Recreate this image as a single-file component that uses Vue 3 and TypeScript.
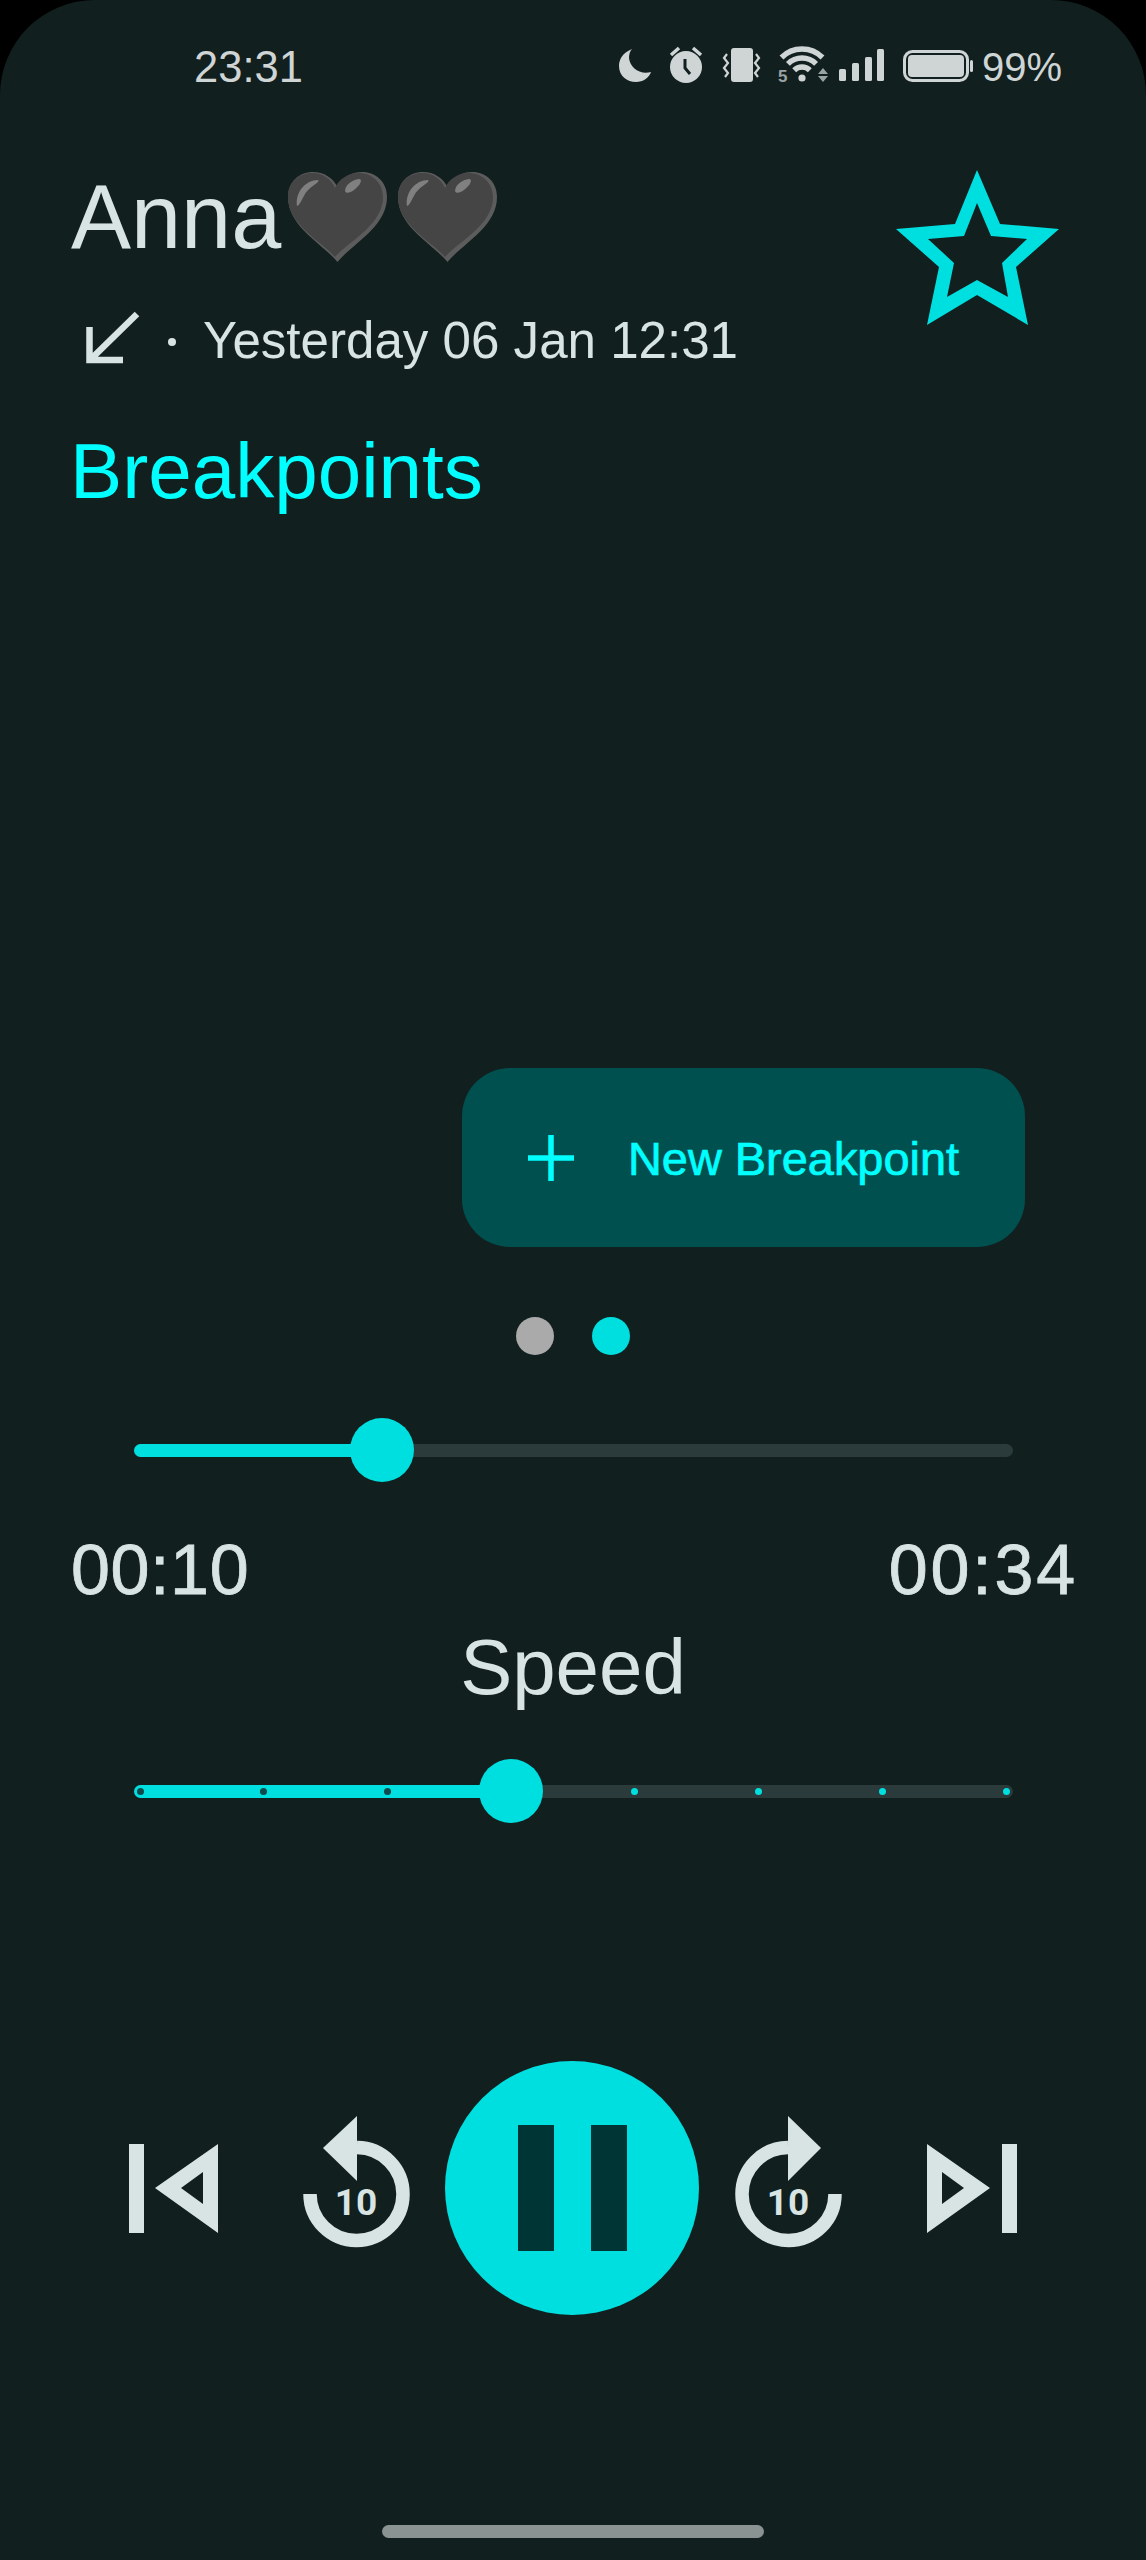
<template>
  <div class="phone">
    <!-- Status bar -->
    <div class="status">
      <span class="clock">23:31</span>
      <div class="status-icons">
        <svg width="45" height="40" viewBox="615 45 45 40">
          <path d="M632 49C622 53 619 60 619 66C619 76 627 82 636 82C643 82 649 78 651 72C640 75 630 68 629 58C629 54 630 51 632 49Z" />
        </svg>
        <svg width="53" height="40" viewBox="660 45 53 40">
          <circle cx="686" cy="67" r="16" />
          <path d="M671 55L679 48M693 48L701 55" class="line" stroke-width="3.5" />
          <path d="M685 59V68L690 74" fill="none" stroke="#121f1f" stroke-width="3" />
        </svg>
        <svg width="57" height="40" viewBox="713 45 57 40">
          <rect x="731" y="48" width="22" height="34" rx="3" />
          <path d="M727 54L724 58L728 63L724 68L728 73L725 77M756 54L759 58L755 63L759 68L755 73L758 77" class="line" stroke-width="2.2" />
        </svg>
        <svg width="62" height="40" viewBox="770 45 62 40">
          <circle cx="802" cy="78" r="3.6" />
          <path d="M781.5 57.500A29 29 0 0 1 822.500 57.500M787.900 63.900A20 20 0 0 1 816.100 63.900M794.200 70.200A11 11 0 0 1 809.800 70.200" class="line" stroke-width="5.500" />
          <text x="778" y="82" class="five">5</text>
          <path d="M823 68L828 74H818ZM823 82L828 76H818Z" class="dim" />
        </svg>
        <svg width="61" height="40" viewBox="832 45 61 40">
          <rect x="839" y="69" width="7" height="12" rx="1.500" />
          <rect x="852" y="63" width="7" height="18" rx="1.500" />
          <rect x="865" y="57" width="7" height="24" rx="1.500" />
          <rect x="877" y="49" width="7" height="32" rx="1.500" />
        </svg>
        <svg width="84" height="40" viewBox="893 45 84 40">
          <rect x="904.500" y="51.500" width="63" height="29" rx="8" class="line" stroke-width="3" />
          <rect x="908" y="55" width="56" height="22" rx="4" />
          <rect x="970" y="60" width="3" height="12" rx="1.500" />
        </svg>
        <span class="battery-text">99%</span>
      </div>
    </div>

    <!-- Contact header -->
    <div class="head">
      <div class="head-left">
        <div class="title-row">
          <span class="name">Anna</span>
          <svg v-for="n in 2" :key="n" class="heart" width="99" height="90" viewBox="0 0 99 90">
            <path d="M49.500 90C35 72 0 55 0 25C0 10 11 0 25 0C36 0 45 6 49.500 15C54 6 63 0 74 0C88 0 99 10 99 25C99 55 64 72 49.500 90Z" fill="#5c5c5c" />
            <path d="M47 85C33 69 0 53 0 25C0 10 11 1 24 1C35 1 43 7 47 16C51 7 60 1 71 1C84 1 95 11 95 25C95 53 61 69 47 85Z" fill="#454545" />
            <path d="M9 34C7 20 18 8 30 8C33 10 22 14 17 22C14 27 12 33 9 34Z" fill="#808080" />
            <path d="M57 19C57 13 65 7 72 7C75 9 70 15 66 18C62 21 58 22 57 19Z" fill="#808080" />
          </svg>
        </div>
        <div class="meta">
          <svg width="132" height="60" viewBox="71 311 132 60">
            <path d="M137 314L90 360M89.500 327V360H123" fill="none" stroke="#d8e4e4" stroke-width="6.500" />
            <circle cx="172" cy="342" r="4" fill="#d8e4e4" />
          </svg>
          <span>Yesterday 06 Jan 12:31</span>
        </div>
      </div>
      <svg class="star" width="175" height="165" viewBox="890 165 175 165">
        <path fill-rule="evenodd" d="M977 170L1000 224L1059 229L1016 267L1028 325L977 295L927 325L939 267L896 229L955 224ZM977 203L964 236L928 239L954 263L947 297L977 280L1008 297L1002 263L1027 239L991 236Z" />
      </svg>
    </div>

    <h2 class="section-title">Breakpoints</h2>

    <div class="new-row">
      <button class="new-btn">
        <svg width="46" height="46" viewBox="0 0 46 46">
          <path d="M23 0V46M0 23H46" stroke="#00ffff" stroke-width="5.500" />
        </svg>
        <span>New Breakpoint</span>
      </button>
    </div>

    <div class="pager">
      <span class="pager-dot"></span>
      <span class="pager-dot active"></span>
    </div>

    <!-- Seek slider -->
    <div class="slider seek">
      <div class="track">
        <div class="fill" :style="{ width: seekPct + '%' }"></div>
      </div>
      <div class="thumb" :style="{ left: seekPct + '%' }"></div>
    </div>

    <div class="times">
      <span class="elapsed">00:10</span>
      <span class="total">00:34</span>
    </div>

    <div class="speed-label">Speed</div>

    <!-- Speed slider -->
    <div class="slider speed">
      <div class="track">
        <div class="fill" :style="{ width: speedPct + '%' }"></div>
        <span
          v-for="t in ticks"
          :key="t.pos"
          class="tick"
          :class="{ on: t.on }"
          :style="{ left: t.pos + '%' }"
        ></span>
      </div>
      <div class="thumb" :style="{ left: speedPct + '%' }"></div>
    </div>

    <!-- Player controls -->
    <div class="controls">
      <svg width="180" height="254" viewBox="120 2061 180 254">
        <path fill-rule="evenodd" d="M129 2144H144V2233H129ZM155 2188L218 2144V2233ZM181 2188L203 2204V2172Z" />
      </svg>
      <svg width="145" height="254" viewBox="300 2061 145 254">
        <path d="M310 2194A46.500 46.500 0 1 0 357 2147.500" fill="none" stroke="#d8e4e4" stroke-width="13.500" />
        <path d="M357 2116L323 2148L357 2181Z" />
        <text x="356" y="2215" class="ten" text-anchor="middle">10</text>
      </svg>
      <button class="pause">
        <span class="pause-bar"></span>
        <span class="pause-bar"></span>
      </button>
      <svg width="145" height="254" viewBox="699 2061 145 254">
        <path d="M835 2194A46.500 46.500 0 1 1 788 2147.500" fill="none" stroke="#d8e4e4" stroke-width="13.500" />
        <path d="M788 2116L821 2148L788 2181Z" />
        <text x="788" y="2215" class="ten" text-anchor="middle">10</text>
      </svg>
      <svg width="180" height="254" viewBox="844 2061 180 254">
        <path fill-rule="evenodd" d="M1002 2144H1017V2233H1002ZM990 2188L927 2144V2233ZM964 2188L942 2204V2172Z" />
      </svg>
    </div>

    <div class="home-bar"></div>
  </div>
</template>

<script setup lang="ts">
import { computed } from 'vue'

interface Tick {
  pos: number
  on: boolean
}

const seekPct = 28.2
const speedStep = 3
const tickCount = 8

// ticks sit 6px inside each end of the 879px track
const tickPos = (i: number) => ((6 + (i * 866) / (tickCount - 1)) / 879) * 100

const speedPct = tickPos(speedStep)

const ticks = computed<Tick[]>(() =>
  Array.from({ length: tickCount }, (_, i) => ({ pos: tickPos(i), on: i < speedStep }))
    .filter((_, i) => i !== speedStep)
)
</script>

<style scoped>
.phone {
  width: 1146px;
  height: 2560px;
  background: #121f1f;
  border-radius: 95px 95px 0 0;
  overflow: hidden;
  font-family: "Liberation Sans", Arial, sans-serif;
  color: #d8e4e4;
  display: flex;
  flex-direction: column;
}

.status {
  display: flex;
  justify-content: space-between;
  align-items: flex-start;
  padding: 42px 84px 0 194px;
  height: 50px;
  color: #cfd4d4;
  font-size: 43.5px;
  line-height: 50px;
}

.status-icons {
  display: flex;
  align-items: flex-start;
}

.status-icons svg {
  margin-top: 3px;
  fill: #cfd4d4;
}

.status-icons .line {
  fill: none;
  stroke: #cfd4d4;
}

.status-icons .dim {
  fill: #9aa3a3;
}

.five {
  font-family: "Liberation Sans", sans-serif;
  font-size: 17px;
  font-weight: 700;
  fill: #9aa3a3;
}

.battery-text {
  margin-left: 5px;
  font-size: 40px;
}

.head {
  display: flex;
  justify-content: space-between;
  align-items: flex-start;
  padding: 70px 81px 0 71px;
}

.title-row {
  display: flex;
  align-items: flex-start;
}

.name {
  font-size: 90px;
  line-height: 110px;
}

.heart {
  margin-top: 10px;
  margin-right: 11px;
}

.heart:first-of-type {
  margin-left: 7px;
}

.meta {
  display: flex;
  margin-top: 39px;
  font-size: 51.1px;
  line-height: 60px;
}

.star {
  margin-top: 3px;
  fill: #00dfe0;
}

.section-title {
  margin: 55px 0 0 70px;
  font-size: 78.2px;
  line-height: 90px;
  font-weight: 400;
  color: #00ffff;
}

.new-row {
  display: flex;
  justify-content: flex-end;
  margin-top: 552px;
  padding-right: 121px;
}

.new-btn {
  display: flex;
  align-items: center;
  gap: 52px;
  width: 563px;
  height: 179px;
  padding: 0 0 0 66px;
  border: none;
  border-radius: 48px;
  background: #005050;
  color: #00ffff;
  font-family: inherit;
  font-size: 46.9px;
  text-align: left;
}

.new-btn span {
  padding-top: 3px;
  margin-left: 2px;
  white-space: nowrap;
  -webkit-text-stroke: 0.7px #00ffff;
}

.pager {
  display: flex;
  justify-content: center;
  gap: 38px;
  margin-top: 70px;
}

.pager-dot {
  width: 38px;
  height: 38px;
  border-radius: 50%;
  background: #aaaaaa;
}

.pager-dot.active {
  background: #00dfe0;
}

.slider {
  position: relative;
  height: 64px;
  margin: 0 133px 0 134px;
  display: flex;
  align-items: center;
}

.slider.seek {
  margin-top: 63px;
}

.slider.speed {
  margin-top: 47px;
}

.track {
  position: relative;
  width: 100%;
  height: 13px;
  border-radius: 7px;
  background: #2b3a3a;
}

.fill {
  height: 100%;
  border-radius: 7px 0 0 7px;
  background: #00dfe0;
}

.thumb {
  position: absolute;
  top: 0;
  width: 64px;
  height: 64px;
  margin-left: -32px;
  border-radius: 50%;
  background: #00dfe0;
}

.tick {
  position: absolute;
  top: 3px;
  width: 7px;
  height: 7px;
  margin-left: -3.500px;
  border-radius: 50%;
  background: #00dfe0;
}

.tick.on {
  background: #0f4a4c;
}

.times {
  display: flex;
  justify-content: space-between;
  margin-top: 48px;
  padding: 0 68px 0 71px;
  font-size: 70px;
  line-height: 80px;
  -webkit-text-stroke: 0.8px #d8e4e4;
}

.elapsed {
  letter-spacing: 0.6px;
}

.total {
  letter-spacing: 2.8px;
}

.speed-label {
  margin-top: 12px;
  font-size: 78px;
  line-height: 90px;
  text-align: center;
}

.controls {
  display: flex;
  margin-top: 238px;
  padding-left: 120px;
  height: 254px;
}

.controls svg {
  flex: none;
  fill: #d8e4e4;
}

.ten {
  font-family: Roboto, sans-serif;
  font-size: 37px;
  font-weight: 700;
}

.pause {
  flex: none;
  display: flex;
  justify-content: center;
  align-items: center;
  gap: 37px;
  width: 254px;
  height: 254px;
  padding: 0;
  border: none;
  border-radius: 50%;
  background: #00dfe0;
}

.pause-bar {
  width: 36px;
  height: 126px;
  background: #003535;
}

.home-bar {
  width: 382px;
  height: 13px;
  margin: 210px auto 0;
  border-radius: 7px;
  background: #8a9292;
}
</style>

<style>
html,
body {
  margin: 0;
  background: #000;
}
</style>
